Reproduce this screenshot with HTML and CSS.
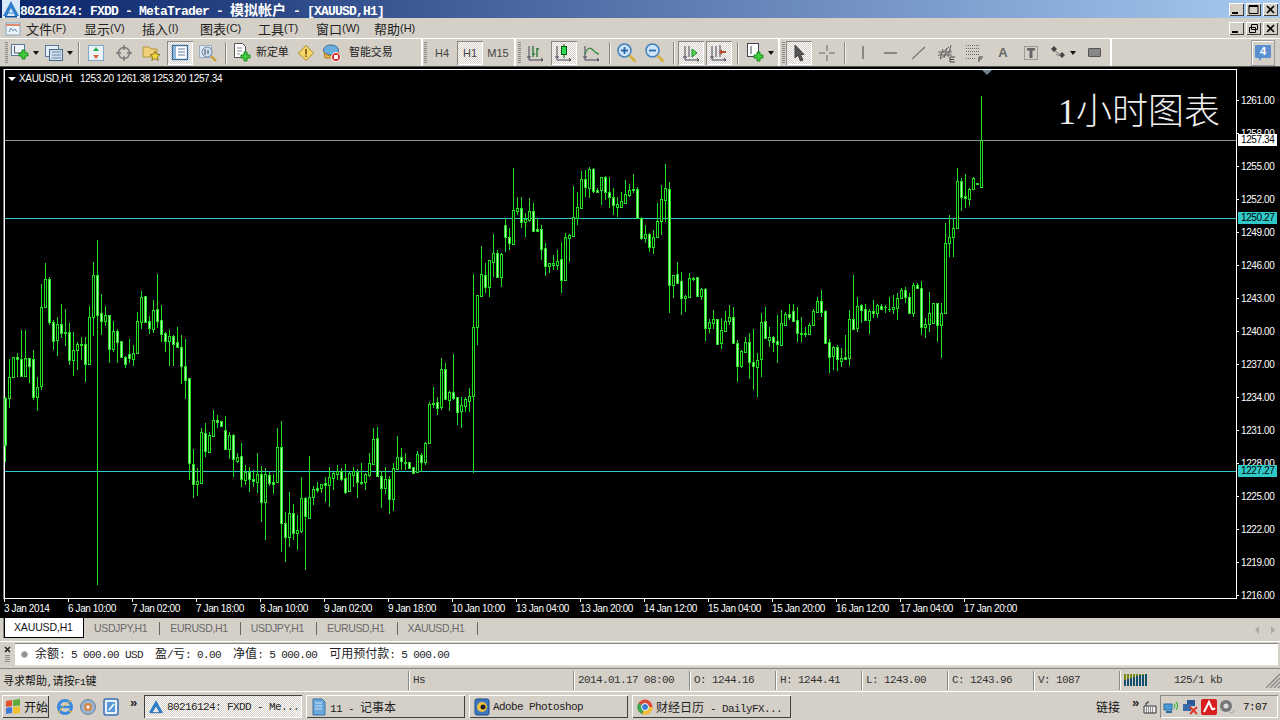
FILE: index.html
```html
<!DOCTYPE html>
<html lang="zh">
<head>
<meta charset="utf-8">
<title>MetaTrader</title>
<link rel="stylesheet" href="styles.css">
</head>
<body>
<div class="app">
  <header class="title">
    <svg class="appicon" width="18" height="18" viewBox="0 0 18 18"><rect width="18" height="18" fill="#d8e8f8"/><path d="M9 1 1 16h4l4-8 4 8h4z" fill="#2f7fc8"/><path d="M3 16h12v1.500H3z" fill="#0f4f98"/><path d="M7 12h4l1 2H6z" fill="#7fb8e8"/></svg>
    <span class="title-text">80216124: FXDD - MetaTrader - <span class="title-c">模拟帐户</span> - [XAUUSD,H1]</span>
    <div class="winbtns">
      <span class="wb"><svg width="15" height="13"><rect x="3" y="9" width="6" height="2" fill="#000"/></svg></span>
      <span class="wb"><svg width="15" height="13"><path d="M3 2.500h9v8H3zM3 3.500h9" fill="none" stroke="#000"/></svg></span>
      <span class="wb"><svg width="15" height="13"><path d="m4 3 7 7m0-7-7 7" stroke="#000" stroke-width="1.600"/></svg></span>
    </div>
  </header>

  <nav class="menu">
    <svg class="menuicon" width="16" height="16" viewBox="0 0 16 16"><rect x="1" y="3" width="14" height="12" fill="#eef3f8" stroke="#8aa6c0"/><path d="M1 5h14" stroke="#e08a70" stroke-width="2"/><path d="m4 12 2-4 2 3 2-2 2 3" fill="none" stroke="#5f8fb8"/></svg>
    <span class="mi">文件<span class="k">(F)</span></span>
    <span class="mi">显示<span class="k">(V)</span></span>
    <span class="mi">插入<span class="k">(I)</span></span>
    <span class="mi">图表<span class="k">(C)</span></span>
    <span class="mi">工具<span class="k">(T)</span></span>
    <span class="mi">窗口<span class="k">(W)</span></span>
    <span class="mi">帮助<span class="k">(H)</span></span>
    <div class="winbtns">
      <span class="wb"><svg width="15" height="13"><rect x="3" y="9" width="6" height="2" fill="#000"/></svg></span>
      <span class="wb"><svg width="15" height="13"><path d="M5.500 2.500h6v5h-6zM3.500 5.500h6v5h-6z" fill="#d4d0c8" stroke="#000"/></svg></span>
      <span class="wb"><svg width="15" height="13"><path d="m4 3 7 7m0-7-7 7" stroke="#000" stroke-width="1.600"/></svg></span>
    </div>
  </nav>

  <div class="toolbar">
    <span class="grip g-first"></span>
    <span class="tb w30"><svg width="20" height="20" viewBox="0 0 20 20"><rect x=".5" y="1.500" width="13" height="11" fill="#eef3f8" stroke="#5b7a9a"/><path d="M3.500 3v7h8" fill="none" stroke="#556"/><path d="M10 6h3v3h3v3h-3v3h-3v-3H7V9h3z" transform="translate(1 1)" fill="#3fcf3f" stroke="#1a8a1a"/></svg><span class="drop"></span></span>
    <span class="tb w30 m4"><svg width="20" height="20" viewBox="0 0 20 20"><rect x=".5" y="2.500" width="13" height="11" fill="#e4ecf4" stroke="#5b7a9a"/><rect x="4.500" y="6.500" width="13" height="11" fill="#cfdcea" stroke="#4a6a8a"/><path d="M7 9h9M7 12h9M7 15h9" stroke="#6a8aa8"/></svg><span class="drop"></span></span>
    <span class="sep m4"></span>
    <span class="tb"><svg width="18" height="18" viewBox="0 0 18 18"><rect x="1.500" y="1.500" width="15" height="15" fill="#eaf2f8" stroke="#7fa6c4"/><path d="m9 3 3 4H6z" fill="#2fae4f"/><path d="m9 15-3-4h6z" fill="#d8663a"/></svg></span>
    <span class="tb"><svg width="18" height="18" viewBox="0 0 18 18"><circle cx="9" cy="9" r="5.500" fill="none" stroke="#777" stroke-width="1.400"/><path d="M9 1v5m0 6v5M1 9h5m6 0h5" stroke="#777" stroke-width="1.400"/></svg></span>
    <span class="tb"><svg width="20" height="18" viewBox="0 0 20 18"><path d="M1 3h6l2 2h6v8H1z" fill="#f2cf7a" stroke="#b5913a"/><path d="m13 7 1.500 3.200 3.500.4-2.600 2.300.8 3.500-3.200-1.800-3.200 1.800.8-3.500L8 10.600l3.500-.4z" fill="#f4d83c" stroke="#8a7a20"/></svg></span>
    <span class="tb on"><svg width="18" height="17" viewBox="0 0 18 17"><rect x="1.500" y="1.500" width="15" height="14" fill="#fff" stroke="#3f6f9f" stroke-width="1.400"/><rect x="2" y="2" width="3" height="13" fill="#8fb4d8"/><path d="M7 5h7M7 8h7M7 11h7" stroke="#5f7f9f"/></svg></span>
    <span class="tb"><svg width="20" height="20" viewBox="0 0 20 20"><rect x="1.500" y="2.500" width="12" height="12" fill="#dfe8f0" stroke="#9ab0c4"/><circle cx="9" cy="9" r="5" fill="#cfe0ee" stroke="#6a8aa8"/><path d="M7 6v6m3-5v4" stroke="#445" /><path d="m13 13 5 5" stroke="#c8a030" stroke-width="2.400"/></svg></span>
    <span class="sep m3"></span>
    <span class="tb order"><svg width="20" height="21" viewBox="0 0 20 21"><path d="M1.500 1.500h8l3 3v11h-11z" fill="#fff" stroke="#555"/><path d="M4 6h5M4 9h5M4 12h3" stroke="#888"/><path d="M10 8h3v3h3v3h-3v3h-3v-3H7v-3h3z" transform="translate(1 2)" fill="#3fcf3f" stroke="#1a8a1a"/></svg><span class="tbt">新定单</span></span>
    <span class="tb m2"><svg width="18" height="18" viewBox="0 0 18 18"><path d="M9 1.500 16.500 9 9 16.500 1.500 9z" fill="#f6d96a" stroke="#a88a20"/><path d="M8.200 5h1.600v5.500H8.200zM8.200 11.500h1.600V13H8.200z" fill="#7a4a10"/></svg></span>
    <span class="tb auto"><svg width="20" height="20" viewBox="0 0 20 20"><ellipse cx="9" cy="7" rx="7.500" ry="5" fill="#6aaede" stroke="#3a6f9f"/><path d="M2 9c3 5 11 5 15 0l-1 6H3z" fill="#f0b84a" stroke="#a87a20"/><circle cx="14" cy="14" r="4.500" fill="#d82a2a" stroke="#fff"/><rect x="12" y="12" width="4" height="4" fill="#fff"/></svg><span class="tbt">智能交易</span></span>
    <span class="wsep m25"></span>
    <span class="grip g-tf"></span>
    <span class="tb tf m1">H4</span>
    <span class="tb tf on">H1</span>
    <span class="tb tf">M15</span>
    <span class="wsep m2"></span>
    <span class="grip"></span>
    <span class="tb m1"><svg width="20" height="20" viewBox="0 0 20 20"><path d="M3 3v14h14" fill="none" stroke="#445" /><path d="M1 14h4M15 15l2 2-2 1" fill="none" stroke="#445"/><path d="M7 3v11M11 5v9M11 6h2M9 11h-2" fill="none" stroke="#2a7a3a" stroke-width="1.400"/></svg></span>
    <span class="tb on"><svg width="20" height="20" viewBox="0 0 20 20"><path d="M3 3v14h14" fill="none" stroke="#445"/><path d="M1 14h4M15 15l2 2-2 1" fill="none" stroke="#445"/><path d="M10 1v14" stroke="#0a5a1a"/><rect x="7.500" y="3.500" width="5" height="8" fill="#2fdc4f" stroke="#0a5a1a"/></svg></span>
    <span class="tb"><svg width="20" height="20" viewBox="0 0 20 20"><path d="M3 3v14h14" fill="none" stroke="#445"/><path d="M1 14h4M15 15l2 2-2 1" fill="none" stroke="#445"/><path d="M3 11c3-8 6-6 8-4 2 2 4 4 6 4" fill="none" stroke="#2a8a3a" stroke-width="1.200"/></svg></span>
    <span class="sep m3"></span>
    <span class="tb"><svg width="22" height="22" viewBox="0 0 22 22"><circle cx="8.500" cy="8.500" r="6.500" fill="#cfe4f8" stroke="#3f7fbf" stroke-width="1.500"/><path d="M8.500 5v7M5 8.500h7" stroke="#2a6aaa" stroke-width="1.800"/><path d="m13.500 13.500 6 6" stroke="#d8b040" stroke-width="2.800"/></svg></span>
    <span class="tb"><svg width="22" height="22" viewBox="0 0 22 22"><circle cx="8.500" cy="8.500" r="6.500" fill="#cfe4f8" stroke="#3f7fbf" stroke-width="1.500"/><path d="M5 8.500h7" stroke="#2a6aaa" stroke-width="1.800"/><path d="m13.500 13.500 6 6" stroke="#d8b040" stroke-width="2.800"/></svg></span>
    <span class="sep m4"></span>
    <span class="tb on"><svg width="20" height="20" viewBox="0 0 20 20"><path d="M4 3v14h14" fill="none" stroke="#445"/><path d="M2 14h4M16 15l2 2-2 1" fill="none" stroke="#445"/><path d="M8 3v11" stroke="#445"/><path d="m11 6 5 4-5 4z" fill="#4fdc4f" stroke="#1a8a2a"/></svg></span>
    <span class="tb on"><svg width="20" height="20" viewBox="0 0 20 20"><path d="M3 3v14h14" fill="none" stroke="#445"/><path d="M1 14h4M15 15l2 2-2 1" fill="none" stroke="#445"/><path d="M7 3v11M11 2v12" stroke="#445"/><path d="m13 6-3 3 3 3zM13 8h4v2h-4z" fill="#b84a2a"/></svg></span>
    <span class="sep m4"></span>
    <span class="tb w30 m4"><svg width="20" height="22" viewBox="0 0 20 22"><rect x="1.500" y="1.500" width="11" height="13" fill="#fff" stroke="#445"/><path d="M5 4v8" stroke="#445"/><path d="M10 9h3v3h3v3h-3v3h-3v-3H7v-3h3z" transform="translate(1 1)" fill="#3fcf3f" stroke="#1a8a1a"/></svg><span class="drop"></span></span>
    <span class="wsep m3"></span>
    <span class="grip"></span>
    <span class="tb on"><svg width="16" height="18" viewBox="0 0 16 18"><path d="M4 1v13l3-3 2.500 6 2.500-1-2.500-5.500H13z" fill="#555" stroke="#444"/></svg></span>
    <span class="tb"><svg width="18" height="18" viewBox="0 0 18 18"><path d="M9 1v6m0 4v6M1 9h6m4 0h6" stroke="#666"/></svg></span>
    <span class="sep m3"></span>
    <span class="tb m1"><svg width="4" height="16"><path d="M2 1v13" stroke="#555" stroke-width="1.200"/></svg></span>
    <span class="tb"><svg width="18" height="6"><path d="M2 3h13" stroke="#555" stroke-width="1.200"/></svg></span>
    <span class="tb"><svg width="16" height="16"><path d="m1 14 13-12" stroke="#777" stroke-width="1.200"/></svg></span>
    <span class="tb"><svg width="20" height="20" viewBox="0 0 20 20"><path d="m1 13 11-9M3 16l11-9M1 9h14M3 12h12M6 6l-3 10M10 5 7 15M14 2l-3 12" stroke="#666" fill="none"/><path d="M13 14h5M13 14v5h5M13 16.500h4" fill="none" stroke="#444"/></svg></span>
    <span class="tb"><svg width="20" height="20" viewBox="0 0 20 20"><path d="M1 2.500h14M1 5.500h14M1 8.500h14M1 11.500h14M1 15.500h9" stroke="#666" stroke-dasharray="1 1"/><path d="M14 14h4M14 14v5M14 16h3" fill="none" stroke="#444"/></svg></span>
    <span class="tb glyph">A</span>
    <span class="tb"><svg width="16" height="16" viewBox="0 0 16 16"><path d="M1.500 1.500h13v13h-13z" fill="none" stroke="#666" stroke-dasharray="1 1"/><path d="M4 3h8v2.500H9.500V13h-3V5.500H4z" fill="#666"/></svg></span>
    <span class="tb w30 m3"><svg width="18" height="16" viewBox="0 0 18 16"><path d="m1 4 3-3 3 3-3 3zM9 10l3-3 3 3-3 3z" fill="#444"/><path d="m5 6 6 4M6 9l3 2" stroke="#777"/></svg><span class="drop"></span></span>
    <span class="tb m2"><span class="rectic"></span></span>
    <span class="wsep m2"></span>
    <span class="grow"></span>
    <span class="chat"><svg width="18" height="18" viewBox="0 0 18 18"><path d="M2 1h14a1 1 0 0 1 1 1v11a1 1 0 0 1-1 1H8l-3 3v-3H2a1 1 0 0 1-1-1V2a1 1 0 0 1 1-1z" fill="#5a8fd0"/></svg><span class="chatn">4</span></span>
  </div>

  <main class="chart" id="chart">
    <div class="frame"></div>
    <div class="hline bid"></div>
    <div class="hline l1"></div>
    <div class="hline l2"></div>
    <svg class="candles" id="candles" width="1280" height="551" viewBox="0 66 1280 551"></svg>
    <span class="shift"></span>
    <div class="legend"><span class="legtri"></span><span>XAUUSD,H1</span><span class="legv">1253.20 1261.38 1253.20 1257.34</span></div>
    <div class="bigtext"><span class="bigone">1</span>小时图表</div>
    <div class="prices">
      <span>1261.00</span><span>1258.00</span><span>1255.00</span><span>1252.00</span><span>1249.00</span><span>1246.00</span><span>1243.00</span><span>1240.00</span><span>1237.00</span><span>1234.00</span><span>1231.00</span><span>1228.00</span><span>1225.00</span><span>1222.00</span><span>1219.00</span><span>1216.00</span>
    </div>
    <span class="plabel p-bid">1257.34</span>
    <span class="plabel p-l1">1250.27</span>
    <span class="plabel p-l2">1227.27</span>
    <div class="times">
      <span>3 Jan 2014</span><span>6 Jan 10:00</span><span>7 Jan 02:00</span><span>7 Jan 18:00</span><span>8 Jan 10:00</span><span>9 Jan 02:00</span><span>9 Jan 18:00</span><span>10 Jan 10:00</span><span>13 Jan 04:00</span><span>13 Jan 20:00</span><span>14 Jan 12:00</span><span>15 Jan 04:00</span><span>15 Jan 20:00</span><span>16 Jan 12:00</span><span>17 Jan 04:00</span><span>17 Jan 20:00</span>
    </div>
  </main>

  <div class="tabs">
    <span class="tab active">XAUUSD,H1</span>
    <span class="tab">USDJPY,H1</span>
    <span class="tab">EURUSD,H1</span>
    <span class="tab">USDJPY,H1</span>
    <span class="tab">EURUSD,H1</span>
    <span class="tab">XAUUSD,H1</span>
    <span class="grow"></span>
    <span class="tabarrows"><span class="tri-l"></span><span class="tri-r"></span></span>
  </div>

  <div class="terminal">
    <div class="termside"><svg width="7" height="7"><path d="m1 1 5 5m0-5-5 5" stroke="#222" stroke-width="1.500"/></svg><span class="termgrip"></span></div>
    <div class="field"><span class="dot"></span><span class="acct"><span class="c">余额</span>: 5 000.00 USD  <span class="c">盈</span>/<span class="c">亏</span>: 0.00  <span class="c">净值</span>: 5 000.00  <span class="c">可用预付款</span>: 5 000.00</span></div>
  </div>

  <div class="status">
    <span class="cell help"><span class="c">寻求帮助</span>,<span class="c">请按</span>F1<span class="c">键</span></span>
    <span class="cell">Hs</span>
    <span class="cell">2014.01.17 08:00</span>
    <span class="cell">O: 1244.16</span>
    <span class="cell">H: 1244.41</span>
    <span class="cell">L: 1243.00</span>
    <span class="cell">C: 1243.96</span>
    <span class="cell">V: 1087</span>
    <span class="cell last">
      <svg width="26" height="14" viewBox="0 0 26 14"><path d="M1 1v6m3-6v6m3-6v6m3-6v6m3-6v6m3-6v6m3-6v6m3-6v6" stroke="#7a8a10" stroke-width="2"/><path d="M1 7v6m3-7v7m3-8v8m3-9v9m3-10v10m3-11v11m3-11v11m3-12v12" stroke="#14506e" stroke-width="2" transform="translate(0 0)"/></svg>
      <span class="kb">125/1 kb</span>
      <svg class="sizer" width="15" height="15" viewBox="0 0 15 15"><path d="M15 1 1 15M15 5 5 15M15 9l-6 6M15 13l-2 2" stroke="#888" stroke-width="1.300"/></svg>
    </span>
  </div>

  <footer class="taskbar">
    <span class="start"><svg width="16" height="15" viewBox="0 0 16 15"><path d="M1 2 7 1v6L1 8z" fill="#e0522a"/><path d="m8 1 7-1v6.500L8 7z" fill="#5faa3a"/><path d="M1 9l6-1v6l-6 1z" fill="#3a7ad8"/><path d="m8 8 7-.5V14l-7 1z" fill="#f0c030"/></svg><span class="st">开始</span></span>
    <span class="ql m-ie"><svg width="18" height="18" viewBox="0 0 18 18"><circle cx="9" cy="9" r="6.500" fill="none" stroke="#3a8ae0" stroke-width="3"/><path d="M3 9h12" stroke="#3a8ae0" stroke-width="2.500"/><path d="M13 13 16 14" stroke="#e8b030" stroke-width="1.500"/><path d="M3 16c-1-3 8-12 13-14" fill="none" stroke="#e8b030"/></svg></span>
    <span class="ql"><svg width="18" height="18" viewBox="0 0 18 18"><circle cx="9" cy="9" r="7.500" fill="#9ab4d0" stroke="#6a8098"/><circle cx="9" cy="9" r="4" fill="#d88a4a"/><circle cx="9" cy="9" r="1.500" fill="#fff"/></svg></span>
    <span class="ql"><svg width="18" height="18" viewBox="0 0 18 18"><rect x="2" y="1" width="14" height="16" rx="2" fill="#e8f0f8" stroke="#3a6fb0" stroke-width="1.500"/><rect x="5" y="4" width="8" height="10" fill="#5a9ad8"/><path d="m7 12 5-6" stroke="#fff" stroke-width="1.500"/></svg></span>
    <span class="chev">»</span>
    <span class="task active"><svg width="16" height="15" viewBox="0 0 18 16"><path d="M9 1 1 15h4l4-7 4 7h4z" fill="#2f7fc8"/><path d="M3 15h12" stroke="#0f4f98"/></svg><span>80216124: FXDD - Me...</span></span>
    <span class="task"><svg width="16" height="18" viewBox="0 0 16 18"><path d="M2 1h9l3 3v13H2z" fill="#6aa8dc" stroke="#3a6f9f"/><path d="M4 5h7M4 8h7M4 11h7" stroke="#cfe4f4"/></svg><span>11 - <span class="c">记事本</span></span></span>
    <span class="task"><svg width="16" height="18" viewBox="0 0 16 18"><rect x="1" y="1" width="14" height="16" rx="2" fill="#3a78c0" stroke="#1a4a88"/><circle cx="8" cy="9" r="5" fill="#f0c040"/><circle cx="9" cy="9" r="2.500" fill="#222"/></svg><span>Adobe Photoshop</span></span>
    <span class="task"><svg width="16" height="16" viewBox="0 0 16 16"><circle cx="8" cy="8" r="7.500" fill="#dc4a3a"/><path d="M8 8 15.500 8A7.500 7.500 0 0 1 5 15z" fill="#f2c230"/><path d="M8 8 5 15A7.500 7.500 0 0 1 1.500 4z" fill="#3aa84a"/><circle cx="8" cy="8" r="3.500" fill="#3a7ad8" stroke="#fff"/></svg><span><span class="c">财经日历</span> - DailyFX...</span></span>
    <span class="grow"></span>
    <span class="links">链接</span>
    <span class="chev m-r">»</span>
    <svg class="kbd" width="14" height="14" viewBox="0 0 14 14"><path d="M1 6h12v7H1z" fill="#eee" stroke="#333"/><path d="M3 8h8M3 10h8M3 12h8" stroke="#333" stroke-dasharray="1 1"/><path d="M3 6V3h2v-2" fill="none" stroke="#333"/></svg>
    <div class="tray">
      <svg width="17" height="16" viewBox="0 0 17 16"><rect x="1" y="5" width="8" height="6" fill="#4a9ad8" stroke="#2a6a9f"/><path d="M3 13h6" stroke="#2a6a9f" stroke-width="2"/><path d="M11 5c1 1 1 3 0 4M13 3c2 2 2 6 0 8" fill="none" stroke="#3ab83a" stroke-width="1.200"/></svg>
      <svg width="17" height="16" viewBox="0 0 17 16"><rect x="5" y="1" width="8" height="6" fill="#2a5a9a"/><rect x="1" y="5" width="8" height="7" fill="#3a6aaa"/><path d="m8 8 7 7m0-7-7 7" stroke="#e03a2a" stroke-width="2"/></svg>
      <svg width="16" height="16" viewBox="0 0 16 16"><rect width="16" height="16" rx="2" fill="#d81e1e"/><path d="M3 13 8 3l3 7c1 1 2 0 3-1" fill="none" stroke="#fff" stroke-width="2"/></svg>
      <svg width="16" height="16" viewBox="0 0 16 16"><circle cx="7" cy="7" r="6" fill="#777"/><circle cx="7" cy="7" r="2.500" fill="#ddd"/><path d="M11 14c2 0 4-1 4-3" fill="none" stroke="#99a"/></svg>
      <span class="clock">7:07</span>
    </div>
  </footer>
</div>
<script src="chart.js"></script>
</body>
</html>
```
FILE: styles.css
```css
* { box-sizing: border-box; }
html, body { margin: 0; padding: 0; background: #d4d0c8; }
.app {
  width: 1280px; height: 720px; overflow: hidden;
  display: flex; flex-direction: column;
  background: #d4d0c8; color: #111;
  font-family: "Liberation Mono", "Noto Sans CJK SC", monospace;
}
.acct, .status, .task, .clock { font-size: 11px; letter-spacing: -.6px; }
.c { font-size: 12px; letter-spacing: 0; font-family: "Noto Sans CJK SC", sans-serif; }
.grow { flex: 1; }

/* title */
.title {
  height: 18px; flex: none; display: flex; align-items: center;
  background: linear-gradient(90deg, #0a246a, #a6caf0);
  color: #fff; white-space: pre;
}
.appicon { margin-left: 2px; }
.title-text { font-weight: 700; font-size: 13px; letter-spacing: -.8px; }
.title-c { font-size: 14px; letter-spacing: 0; font-family: "Noto Sans CJK SC", sans-serif; }
.winbtns { margin-left: auto; margin-right: 2px; display: flex; gap: 2px; }
.wb {
  width: 15px; height: 13px; display: block; background: #d4d0c8;
  box-shadow: inset 1px 1px #fff, inset -1px -1px #404040;
}
.wb svg { display: block; }

/* menu */
.menu { height: 20px; flex: none; display: flex; align-items: center; padding-left: 5px; }
.menuicon { margin-right: 5px; }
.mi { width: 58px; font: 13px "Noto Sans CJK SC", sans-serif; color: #222; white-space: pre; display: flex; align-items: center; }
.k { font: 11px "Liberation Sans", sans-serif; }

/* toolbar */
.toolbar {
  height: 28px; flex: none; display: flex; align-items: center;
  border-top: 1px solid #fff; padding-left: 5px; overflow: hidden;
}
.grip {
  width: 3px; height: 22px; flex: none;
  background: repeating-linear-gradient(#8a8a84 0 1px, #d4d0c8 1px 2px);
  margin-left: 2px;
}
.g-first { margin-left: 0; margin-right: 2px; }
.g-tf { margin-left: 1px; }
.tb {
  width: 28px; height: 25px; flex: none; display: flex; align-items: center; justify-content: center;
  color: #555; font: 11px "Liberation Sans", sans-serif;
}
.tb.on {
  width: 26px; height: 24px; margin: 0 1px;
  background: #e8e6e0 repeating-conic-gradient(#fff 0 25%, #d4d0c8 0 50%) 0 0/2px 2px;
  box-shadow: inset 1px 1px #8a8a84, inset -1px -1px #fff;
}
.w30 { width: 30px; }
.order { width: 61px; justify-content: flex-start; padding-left: 4px; }
.auto { width: 76px; justify-content: flex-start; padding-left: 2px; }
.tbt { font: 11px "Noto Sans CJK SC", sans-serif; color: #222; margin: -4px 0 0 3px; letter-spacing: -.1px; white-space: nowrap; }
.auto .tbt { margin-left: 7px; }
.drop { width: 0; height: 0; border: 3px solid transparent; border-top: 4px solid #111; border-bottom: 0; margin-left: 2px; }
.sep { width: 1px; height: 22px; flex: none; background: #8a8a84; box-shadow: 1px 0 #f2f0ea; margin: 0 3px 0 2px; }
.wsep { width: 2px; height: 27px; flex: none; background: #fff; }
.m1 { margin-left: 1px; } .m2 { margin-left: 2px; } .m3 { margin-left: 3px; }
.m4 { margin-left: 4px; } .m25 { margin-left: 25px; }
.tf { font-size: 11px; color: #444; }
.glyph { font-weight: 700; font-size: 13px; color: #666; }
.rectic { width: 13px; height: 9px; background: #888; border: 1px solid #555; border-radius: 1px; }
.chat {
  width: 24px; height: 26px; margin-right: 5px; display: flex; align-items: center; justify-content: center;
  position: relative; border: 1px solid #999; box-shadow: inset 1px 1px #fff;
}
.chatn { position: absolute; left: 0; right: 0; top: 4px; text-align: center; font: 700 11px "Liberation Sans", sans-serif; color: #fff; }

/* chart */
.chart {
  height: 551px; flex: none; position: relative; background: #000; color: #fff;
  border-top: 1px solid #555; overflow: hidden;
  font-family: "Liberation Sans", sans-serif; font-size: 10px; letter-spacing: -.4px;
}
.frame { position: absolute; left: 4px; top: 2px; width: 1233px; height: 530px; border: 1px solid #fff; box-shadow: -1px 0 #777; }
.candles { position: absolute; left: 0; top: -1px; display: block; }
.hline { position: absolute; left: 5px; width: 1231px; height: 1px; }
.bid { top: 73px; background: #8f9a96; }
.l1 { top: 151px; background: #30c8c8; }
.l2 { top: 404px; background: #30c8c8; }
.shift { position: absolute; left: 982px; top: 3px; border: 5px solid transparent; border-top: 5px solid #6f7f90; border-bottom: 0; }
.legend { position: absolute; left: 8px; top: 4px; display: flex; align-items: center; letter-spacing: -.35px; white-space: pre; height: 14px; }
.legtri { width: 0; height: 0; border: 4px solid transparent; border-top: 4px solid #fff; border-bottom: 0; margin-right: 3px; margin-top: 1px; }
.legv { margin-left: 7px; }
.bigtext { position: absolute; left: 1058px; top: 17px; font: 36px/48px "Noto Sans CJK SC", sans-serif; font-weight: 300; letter-spacing: 0; color: #eee; white-space: nowrap; }
.bigone { font-family: "Liberation Serif", serif; }
.prices { position: absolute; left: 1237px; top: 17px; width: 43px; display: flex; flex-direction: column; }
.prices span { height: 33px; line-height: 33px; padding-left: 4px; position: relative; }
.prices span::before { content: ""; position: absolute; left: 0; top: 16px; width: 2px; height: 1px; background: #fff; }
.plabel { position: absolute; left: 1238px; width: 39px; height: 12px; line-height: 12px; padding-left: 3px; color: #000; }
.p-bid { top: 67px; background: #fff; }
.p-l1 { top: 145px; background: #30c8c8; }
.p-l2 { top: 398px; background: #30c8c8; }
.times { position: absolute; left: 4px; top: 533px; display: flex; }
.times span { width: 64px; height: 16px; line-height: 16px; padding-top: 1px; white-space: nowrap; position: relative; }
.times span::before { content: ""; position: absolute; left: 0; top: -1px; width: 1px; height: 3px; background: #fff; }

/* tabs */
.tabs {
  height: 24px; flex: none; display: flex; align-items: flex-start; border-top: 1px solid #000;
  font: 10.500px "Liberation Sans", sans-serif; letter-spacing: -.35px; color: #6a6a6a; padding-left: 4px;
}
.tab { height: 20px; line-height: 20px; padding: 0 13px 0 10px; position: relative; white-space: nowrap; }
.tab::after { content: ""; position: absolute; right: 0; top: 4px; width: 1px; height: 13px; background: #666; }
.tab.active { width: 80px; background: #fff; color: #111; border: 1px solid #000; border-top: 0; border-left-width: 1px; box-shadow: -1px 0 #888; padding: 0 0 0 9px; line-height: 19px; letter-spacing: -.15px; }
.tab.active::after { display: none; }
.tabarrows { display: flex; gap: 12px; margin: 8px 5px 0 0; }
.tri-l, .tri-r { width: 0; height: 0; border: 3px solid transparent; border-top-width: 4px; border-bottom-width: 4px; }
.tri-l { border-right: 4px solid #aaa; border-left: 0; }
.tri-r { border-left: 4px solid #aaa; border-right: 0; }

/* terminal */
.terminal { height: 28px; flex: none; display: flex; border-top: 1px solid #fff; padding-top: 1px; border-bottom: 1px solid #8a8a84; }
.termside { width: 15px; display: flex; flex-direction: column; align-items: center; padding-top: 3px; gap: 2px; }
.termside svg { display: block; margin-right: 1px; }
.termgrip { width: 5px; height: 8px; background: repeating-linear-gradient(#8a8a84 0 1px, #d4d0c8 1px 2px); }
.field { flex: 1; margin: 0 2px 2px 0; height: 23px; background: #fff; border-top: 1px solid #8a8a84; border-bottom: 1px solid #e8e6e0; display: flex; align-items: center; }
.dot { width: 7px; height: 7px; border-radius: 50%; background: #8a8f92; border: 1px solid #bbb; margin-left: 6px; flex: none; }
.acct { margin: -1px 0 0 7px; white-space: pre; color: #222; display: block; line-height: 14px; }

/* status */
.status {
  height: 22px; flex: none; display: grid; grid-template-columns: 408px 165px 116px 86px 86px 86px 86px 86px 1fr;
  align-items: center; white-space: pre; color: #333;
}
.cell { height: 19px; line-height: 19px; padding-left: 4px; border-left: 1px solid #8a8a84; box-shadow: inset 1px 0 #fff; }
.help { border: 0; box-shadow: none; padding-left: 3px; color: #111; font-size: 9.500px; letter-spacing: -.2px; }
.help .c { font-size: 11px; }
.last { display: flex; align-items: center; position: relative; padding-left: 4px; }
.kb { margin-left: 24px; }
.sizer { margin-left: auto; }

/* taskbar */
.taskbar { height: 29px; flex: none; display: flex; align-items: center; border-top: 1px solid #fff; padding-top: 1px; padding-left: 2px; white-space: pre; }
.start { width: 47px; height: 23px; display: flex; align-items: center; padding-left: 3px; gap: 2px; box-shadow: inset 1px 1px #fff, inset -1px -1px #404040; }
.st { font: 12px "Noto Sans CJK SC", sans-serif; line-height: 20px; margin-left: 1px; }
.ql { width: 23px; display: flex; justify-content: center; }
.m-ie { margin-left: 4px; }
.chev { width: 12px; font: 700 13px "Liberation Sans", sans-serif; margin: -8px 0 0 8px; color: #222; }
.m-r { margin-left: 12px; width: 10px; }
.task {
  width: 159px; height: 23px; margin-right: 4px; display: flex; align-items: center; gap: 3px; padding-left: 5px; color: #222;
  box-shadow: inset 1px 1px #fff, inset -1px -1px #404040;
}
.task.active {
  width: 158px; margin: 0 4px 0 2px; padding-left: 4px;
  background: repeating-conic-gradient(#fff 0 25%, #d4d0c8 0 50%) 0 0/2px 2px;
  box-shadow: inset 1px 1px #404040, inset -1px -1px #fff;
}
.links { font: 12px "Noto Sans CJK SC", sans-serif; }
.kbd { margin-left: 1px; margin-right: 3px; }
.tray { width: 118px; height: 23px; margin-right: 2px; display: flex; align-items: center; gap: 2px; padding-left: 3px; box-shadow: inset 1px 1px #8a8a84, inset -1px -1px #fff; }
.clock { margin-left: 6px; }
```
FILE: chart.js
```javascript
// rows: high, bodyTop, bodyBottom, low, filled — values in 1/3 px from the segment's y offset
var segments = [
  { x: 5, off: 230, d: "501 504 645 696 1|388 442 505 535 0|380 382 442 445 0|370 382 388 440 1|300 388 437 437 1|300 385 437 437 0|385 385 407 460 1|360 388 500 510 1|440 470 500 542 0|162 232 467 480 0|98 148 232 235 0|140 148 275 285 1|270 275 332 360 1|260 282 330 378 0|222 282 310 325 1|238 306 310 348 1|280 306 390 405 1|305 360 390 437 0|335 342 360 420 0|322 342 345 390 1|322 342 402 455 1|228 262 402 402 0|95 135 262 318 0|30 135 255 1065 1|192 250 272 315 1|228 255 272 288 0|255 255 357 400 1|272 303 357 365 0|298 303 335 400 1|333 333 380 382 1|378 380 402 415 1|328 373 383 400 1|345 370 387 408 0|245 273 368 372 0|182 200 275 298 0|198 198 275 280 1|258 272 293 312 1|210 240 297 308 0|132 238 273 295 1|225 270 312 335 1|305 308 333 365 1|300 318 332 408 0|315 318 342 408 1|290 336 352 355 1|315 352 408 462 1|328 408 450 508 1|445 445 700 750 1" },
  { x: 193, off: 400, d: "148 192 253 295 1|205 243 253 288 0|85 97 248 250 0|68 100 152 172 1|95 105 155 158 0|30 60 107 107 0|45 60 65 83 1|62 64 77 80 1|48 90 148 148 1|95 105 148 178 0|102 105 178 232 1|160 170 182 190 0|130 168 238 262 1|195 215 240 255 0|200 216 238 275 1|210 238 243 260 1|160 222 245 280 0|198 222 305 365 1|205 222 305 420 0|215 225 250 258 1|222 247 252 282 1|83 142 245 250 0|62 142 370 455 1|335 370 410 485 1|275 340 410 440 0|312 340 398 420 1|345 390 398 450 0|232 295 392 400 0|290 295 348 510 1|168 290 355 355 0" },
  { x: 313, off: 440, d: "138 148 172 195 0|125 145 150 158 1|132 132 143 160 0|112 130 135 185 1|82 112 135 200 0|95 98 113 150 0|75 92 102 120 0|85 92 118 122 1|72 115 157 162 1|95 100 153 155 0|82 92 105 140 0|88 95 125 175 1|70 125 128 135 1|100 102 125 150 0|38 68 105 110 0|-36 -3 72 75 0|-39 -6 108 110 1|92 108 143 205 1|82 118 143 162 0|108 118 178 222 1|70 85 178 212 0|-12 52 88 90 0|25 52 62 90 1|38 65 68 90 1|65 67 85 88 1|80 82 100 102 1|32 42 95 98 0|38 45 65 95 1|5 10 65 75 0" },
  { x: 429, off: 160, d: "725 733 850 853 0|682 728 732 745 1|712 727 743 765 1|595 628 740 750 0|610 628 718 720 1|692 697 720 752 0|582 697 713 720 1|712 712 755 795 1|712 735 752 803 0|712 718 738 755 0|685 707 722 755 0|342 502 707 940 0|405 405 502 555 0|258 343 408 412 0|310 345 380 400 1|300 300 380 412 0|222 280 305 350 0|270 280 352 353 1|278 283 352 380 0|175 196 232 275 1|205 232 248 270 1|25 150 252 255 0|110 145 152 165 0|112 145 185 205 1|160 177 185 232 0|115 152 180 185 0|128 153 212 215 1|175 208 212 214 1|195 208 268 300 1|250 265 318 348 1|310 310 318 340 0|285 308 315 330 0|270 302 315 330 0|245 298 360 400 1|218 232 360 360 0|222 226 234 305 0|78 172 227 228 0|95 142 175 195 0|32 58 143 143 0|30 58 80 112 1|22 28 83 115 0|25 28 93 100 1|85 90 97 98 1|50 52 90 135 0|48 50 97 120 1|50 97 112 145 1|85 112 135 165 1|110 133 142 170 0|95 123 140 142 0|60 102 128 130 0|72 90 105 110 0|42 88 90 100 1|82 88 175 178 1" },
  { x: 641, off: 160, d: "172 175 235 240 1|195 222 235 250 0|220 222 260 275 1|210 230 262 282 0|130 183 230 232 0|75 118 183 225 0|12 85 120 185 0|65 88 375 458 1|345 345 375 415 0|305 343 368 368 1|335 363 415 465 1|405 408 415 455 0|338 355 410 412 0|350 355 356 362 1|352 352 408 410 1|385 388 408 420 0|385 387 505 542 1|478 487 505 518 0|450 478 488 508 0|476 478 552 555 1|475 510 550 566 0|452 482 512 515 0|435 472 482 495 0|442 472 550 552 1|540 550 617 665 1|570 572 617 625 0|530 545 575 578 0|520 545 607 657 1|507 607 618 690 1|580 600 620 710 0|458 485 598 652 0|440 482 535 538 1|500 532 540 560 0|528 530 545 575 1|465 542 553 608 1|450 490 556 558 0|455 462 495 496 0|432 463 470 480 1|432 452 482 485 1|440 480 520 545 1|470 520 521 545 1|500 520 521 530 1|488 496 522 524 0|448 452 496 498 0|412 424 455 457 0|390 424 456 470 1|450 452 548 550 1|537 547 590 638 1|558 562 588 630 0|555 562 598 632 1|565 595 603 622 0|525 592 597 598 1|450 478 593 618 0|345 478 508 510 1|412 438 505 515 0|432 436 450 488 1|432 448 480 482 1|448 452 480 522 0|420 452 458 475 1|432 436 458 475 0|433 438 446 450 1|435 440 441 458 1|412 447 448 455 1|405 442 448 462 0|398 415 445 480 0|385 390 415 418 0|380 390 412 430 1|400 412 458 460 1|368 375 458 472 0|368 375 385 388 1|362 385 502 525 1|475 493 502 535 0|395 458 492 515 0|430 430 488 490 0|428 430 495 545 1|430 460 495 595 0|190 250 460 462 0|165 232 248 290 0|178 205 232 290 0|25 63 205 207 0|55 63 110 152 1|42 108 113 145 1|85 87 117 138 0|52 55 88 90 0|69 70 71 72 1|-192 -60 81 81 0" }
];

var wicks = "", outer = "", hollow = "", solid = "";
function box(x, y, w, h) { return "M" + x + " " + y + "h" + w + "v" + h + "h" + (-w) + "z"; }

segments.forEach(function (seg) {
  seg.d.split("|").forEach(function (row, i) {
    var v = row.split(" ").map(function (n) { return Math.round(seg.off + Number(n) / 3); });
    var x = seg.x + i * 4;
    wicks += box(x, v[0], 1, Math.max(1, v[3] - v[0]));
    outer += box(x - 1, v[1], 3, Math.max(1, v[2] - v[1] + 1));
    var inner = box(x, v[1] + 1, 1, Math.max(0, v[2] - v[1] - 1));
    if (Number(row.split(" ")[4])) { solid += inner; } else { hollow += inner; }
  });
});

var NS = "http://www.w3.org/2000/svg";
var svg = document.getElementById("candles");
[[wicks, "#24e024"], [outer, "#24e024"], [hollow, "#000000"], [solid, "#b4ffb4"]].forEach(function (p) {
  var path = document.createElementNS(NS, "path");
  path.setAttribute("d", p[0]);
  path.setAttribute("fill", p[1]);
  path.setAttribute("shape-rendering", "crispEdges");
  svg.appendChild(path);
});
```
